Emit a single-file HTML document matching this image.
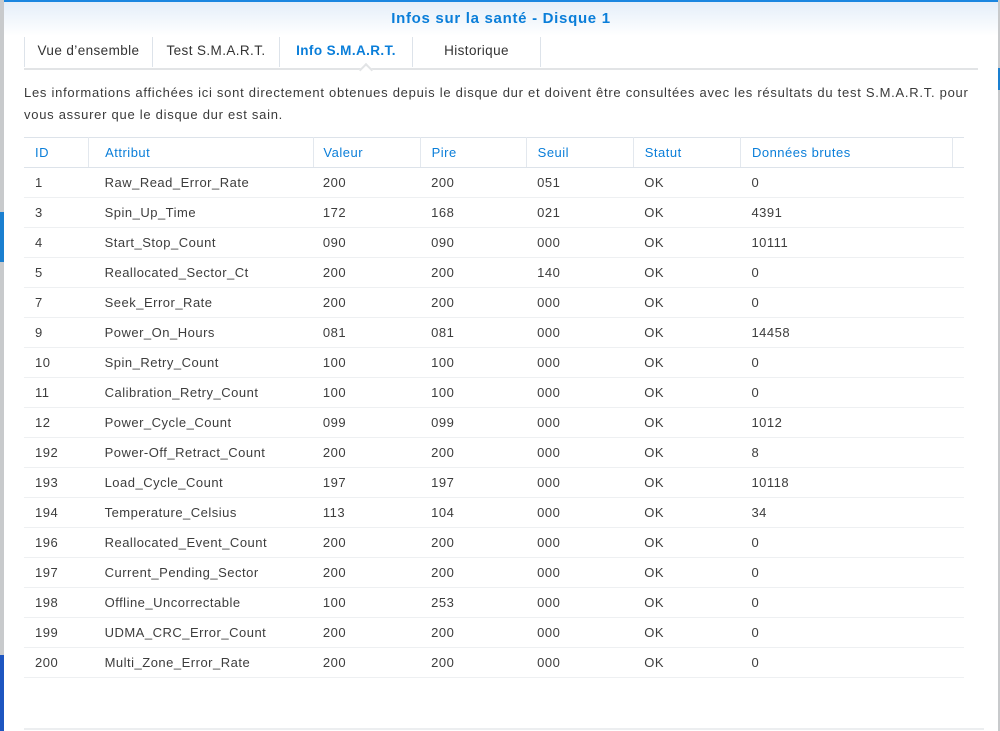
<!DOCTYPE html>
<html><head><meta charset="utf-8"><style>
*{margin:0;padding:0;box-sizing:border-box}
body{width:1000px;height:731px;overflow:hidden;background:#c8cacc;font-family:"Liberation Sans",sans-serif;position:relative}
.bl1{position:absolute;left:0;top:212px;width:4px;height:50px;background:#1a7fd0}
.bl2{position:absolute;left:0;top:655px;width:4px;height:76px;background:#1d55c0}
.br1{position:absolute;right:0;top:68px;width:3px;height:22px;background:#1a7fd0}
.dlg{position:absolute;left:4px;top:0;width:994px;height:731px;background:#fff;border-top:2px solid #1a86e0}
.title{height:34px;background:linear-gradient(#e4eef9,#fff);text-align:center;font-weight:bold;color:#0a7ed9;font-size:15px;letter-spacing:0.7px;line-height:34px}
.tabs{position:absolute;left:20px;top:35px;width:954px;height:33px;border-bottom:2px solid #e2e4e6}
.tab{position:absolute;top:0;height:30px;line-height:28px;font-size:13.5px;letter-spacing:0.4px;color:#333;border-left:1px solid #dde3ea;text-align:center}
.tab.act{color:#0a7ed9;font-weight:bold}
.notch{position:absolute;left:337px;top:28px;width:10px;height:10px;background:#fff;border-left:2px solid #e2e4e6;border-top:2px solid #e2e4e6;transform:rotate(45deg)}
.desc{position:absolute;left:20px;top:80px;font-size:13px;letter-spacing:0.73px;color:#3a3a3a;line-height:22px;width:970px;white-space:nowrap}
table{position:absolute;left:20px;top:135px;width:940px;border-collapse:collapse;font-size:13px;letter-spacing:0.5px;color:#3d3d3d}
th{height:30px;font-weight:normal;color:#0a7ed9;text-align:left;padding-left:11px;border-top:1px solid #dde3ea;border-bottom:1px solid #dde3ea;border-right:1px solid #e3e8ee}
th:last-child{border-right:none}
td{height:30px;padding-left:11px;border-bottom:1px solid #eef0f2}
th:nth-child(2),td:nth-child(2){padding-left:16px}
th:nth-child(3),td:nth-child(3){padding-left:9px}
.bot{position:absolute;left:20px;top:726px;width:960px;height:2px;background:#eceef0}
</style></head><body>
<div class="bl1"></div><div class="bl2"></div><div class="br1"></div>
<div class="dlg">
<div class="title">Infos sur la santé - Disque 1</div>
<div class="tabs">
<div class="tab" style="left:0;width:128px">Vue d’ensemble</div>
<div class="tab" style="left:128px;width:127px">Test S.M.A.R.T.</div>
<div class="tab act" style="left:255px;width:133px">Info S.M.A.R.T.</div>
<div class="tab" style="left:388px;width:128px">Historique</div>
<div class="tab" style="left:516px;width:1px"></div>
<div class="notch"></div>
</div>
<div class="desc">Les informations affichées ici sont directement obtenues depuis le disque dur et doivent être consultées avec les résultats du test S.M.A.R.T. pour<br>vous assurer que le disque dur est sain.</div>
<table>
<colgroup><col style="width:65px"><col style="width:226px"><col style="width:107px"><col style="width:107px"><col style="width:108px"><col style="width:108px"><col style="width:214px"><col></colgroup>
<tr><th>ID</th><th>Attribut</th><th>Valeur</th><th>Pire</th><th>Seuil</th><th>Statut</th><th>Données brutes</th><th></th></tr>
<tr><td>1</td><td>Raw_Read_Error_Rate</td><td>200</td><td>200</td><td>051</td><td>OK</td><td>0</td><td></td></tr>
<tr><td>3</td><td>Spin_Up_Time</td><td>172</td><td>168</td><td>021</td><td>OK</td><td>4391</td><td></td></tr>
<tr><td>4</td><td>Start_Stop_Count</td><td>090</td><td>090</td><td>000</td><td>OK</td><td>10111</td><td></td></tr>
<tr><td>5</td><td>Reallocated_Sector_Ct</td><td>200</td><td>200</td><td>140</td><td>OK</td><td>0</td><td></td></tr>
<tr><td>7</td><td>Seek_Error_Rate</td><td>200</td><td>200</td><td>000</td><td>OK</td><td>0</td><td></td></tr>
<tr><td>9</td><td>Power_On_Hours</td><td>081</td><td>081</td><td>000</td><td>OK</td><td>14458</td><td></td></tr>
<tr><td>10</td><td>Spin_Retry_Count</td><td>100</td><td>100</td><td>000</td><td>OK</td><td>0</td><td></td></tr>
<tr><td>11</td><td>Calibration_Retry_Count</td><td>100</td><td>100</td><td>000</td><td>OK</td><td>0</td><td></td></tr>
<tr><td>12</td><td>Power_Cycle_Count</td><td>099</td><td>099</td><td>000</td><td>OK</td><td>1012</td><td></td></tr>
<tr><td>192</td><td>Power-Off_Retract_Count</td><td>200</td><td>200</td><td>000</td><td>OK</td><td>8</td><td></td></tr>
<tr><td>193</td><td>Load_Cycle_Count</td><td>197</td><td>197</td><td>000</td><td>OK</td><td>10118</td><td></td></tr>
<tr><td>194</td><td>Temperature_Celsius</td><td>113</td><td>104</td><td>000</td><td>OK</td><td>34</td><td></td></tr>
<tr><td>196</td><td>Reallocated_Event_Count</td><td>200</td><td>200</td><td>000</td><td>OK</td><td>0</td><td></td></tr>
<tr><td>197</td><td>Current_Pending_Sector</td><td>200</td><td>200</td><td>000</td><td>OK</td><td>0</td><td></td></tr>
<tr><td>198</td><td>Offline_Uncorrectable</td><td>100</td><td>253</td><td>000</td><td>OK</td><td>0</td><td></td></tr>
<tr><td>199</td><td>UDMA_CRC_Error_Count</td><td>200</td><td>200</td><td>000</td><td>OK</td><td>0</td><td></td></tr>
<tr><td>200</td><td>Multi_Zone_Error_Rate</td><td>200</td><td>200</td><td>000</td><td>OK</td><td>0</td><td></td></tr>
</table>
<div class="bot"></div>
</div>
</body></html>
